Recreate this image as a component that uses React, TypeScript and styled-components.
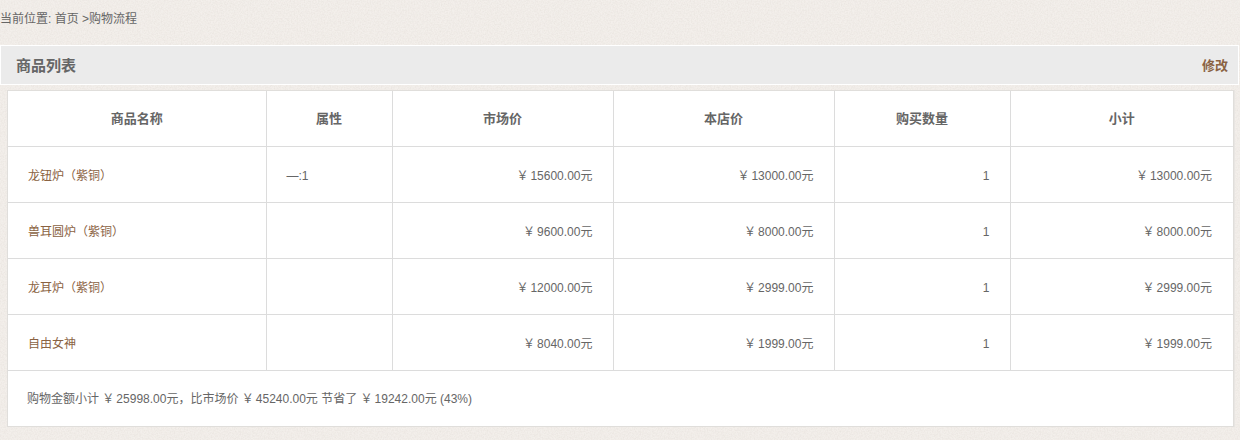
import styled, { createGlobalStyle } from "styled-components";

const paperTexture = `url("data:image/svg+xml,%3Csvg xmlns='http://www.w3.org/2000/svg' width='400' height='400'%3E%3Cfilter id='n'%3E%3CfeTurbulence type='fractalNoise' baseFrequency='0.7' numOctaves='3' stitchTiles='stitch'/%3E%3CfeColorMatrix values='0 0 0 0 0.55 0 0 0 0 0.5 0 0 0 0 0.45 0 0 0 0.32 -0.1'/%3E%3C/filter%3E%3Crect width='400' height='400' filter='url(%23n)'/%3E%3C/svg%3E")`;

const GlobalStyle = createGlobalStyle`
  html, body {
    margin: 0;
    padding: 0;
    background: #f3efeb ${paperTexture};
    font-family: "Liberation Sans", "Noto Sans CJK SC", sans-serif;
    font-size: 12px;
    color: #666;
  }
`;

const Page = styled.div`
  width: 1240px;
  height: 440px;
  overflow: hidden;
`;

const Breadcrumb = styled.div`
  height: 45px;
  padding-top: 11px;
  box-sizing: border-box;
  line-height: 17px;
  color: #666;
`;

const SectionBar = styled.div`
  display: flex;
  align-items: center;
  justify-content: space-between;
  height: 40px;
  box-sizing: border-box;
  margin-right: 1px;
  padding: 0 10px 2px 15px;
  background: #ebebeb;
  border: 1px solid #fff;
`;

const SectionTitle = styled.h2`
  margin: 0;
  font-size: 15px;
  font-weight: bold;
  color: #666;
`;

const EditLink = styled.a`
  font-size: 13px;
  font-weight: bold;
  color: #8a6242;
  text-decoration: none;
`;

const TableWrap = styled.div`
  margin: 5px 6px 0 7px;
  border: 1px solid #e0dedb;
  background: #fff;
  box-shadow: 1px 0 0 #e8e5e2;
`;

const Table = styled.table`
  width: 100%;
  table-layout: fixed;
  border-collapse: collapse;
`;

const HeadCell = styled.th`
  height: 55px;
  padding: 0 0 1px;
  box-sizing: border-box;
  border-right: 1px solid #dcdcdc;
  border-bottom: 1px solid #dcdcdc;
  font-size: 13px;
  font-weight: bold;
  text-align: center;
  color: #666;

  &:last-child {
    border-right: 0;
  }
`;

const Cell = styled.td<{ $align?: "left" | "right" }>`
  height: 56px;
  padding: 4px 20px 0;
  box-sizing: border-box;
  border-right: 1px solid #dcdcdc;
  border-bottom: 1px solid #dcdcdc;
  line-height: 18px;
  text-align: ${({ $align }) => $align ?? "left"};
  color: #666;

  &:last-child {
    padding-right: 21px;
    border-right: 0;
  }
`;

const ProductLink = styled.a`
  color: #8a6242;
  text-decoration: none;
`;

const Yen = styled.span`
  margin-right: 2px;
`;

const Summary = styled.div`
  height: 55px;
  padding-left: 19px;
  line-height: 56px;
  white-space: pre;
  color: #666;
`;

const columns = [
  { title: "商品名称", width: 258 },
  { title: "属性", width: 126 },
  { title: "市场价", width: 221 },
  { title: "本店价", width: 221 },
  { title: "购买数量", width: 176 },
  { title: "小计", width: 223 },
];

const rows = [
  { name: "龙钮炉（紫铜）", attr: "—:1", market: "15600.00", price: "13000.00", qty: 1, subtotal: "13000.00" },
  { name: "兽耳圆炉（紫铜）", attr: "", market: "9600.00", price: "8000.00", qty: 1, subtotal: "8000.00" },
  { name: "龙耳炉（紫铜）", attr: "", market: "12000.00", price: "2999.00", qty: 1, subtotal: "2999.00" },
  { name: "自由女神", attr: "", market: "8040.00", price: "1999.00", qty: 1, subtotal: "1999.00" },
];

const Money = ({ value }: { value: string }) => (
  <span>
    <Yen>￥</Yen>
    {value}元
  </span>
);

export default function App() {
  return (
    <Page>
      <GlobalStyle />
      <Breadcrumb>当前位置: 首页 &gt;购物流程</Breadcrumb>
      <SectionBar>
        <SectionTitle>商品列表</SectionTitle>
        <EditLink href="#">修改</EditLink>
      </SectionBar>
      <TableWrap>
        <Table>
          <colgroup>
            {columns.map((c) => (
              <col key={c.title} style={{ width: c.width }} />
            ))}
          </colgroup>
          <thead>
            <tr>
              {columns.map((c) => (
                <HeadCell key={c.title}>{c.title}</HeadCell>
              ))}
            </tr>
          </thead>
          <tbody>
            {rows.map((r) => (
              <tr key={r.name}>
                <Cell>
                  <ProductLink href="#">{r.name}</ProductLink>
                </Cell>
                <Cell>{r.attr}</Cell>
                <Cell $align="right">
                  <Money value={r.market} />
                </Cell>
                <Cell $align="right">
                  <Money value={r.price} />
                </Cell>
                <Cell $align="right">{r.qty}</Cell>
                <Cell $align="right">
                  <Money value={r.subtotal} />
                </Cell>
              </tr>
            ))}
          </tbody>
        </Table>
        <Summary>
          购物金额小计 <Money value="25998.00" />，比市场价 <Money value="45240.00" /> 节省了 <Money value="19242.00" /> (43%)
        </Summary>
      </TableWrap>
    </Page>
  );
}
